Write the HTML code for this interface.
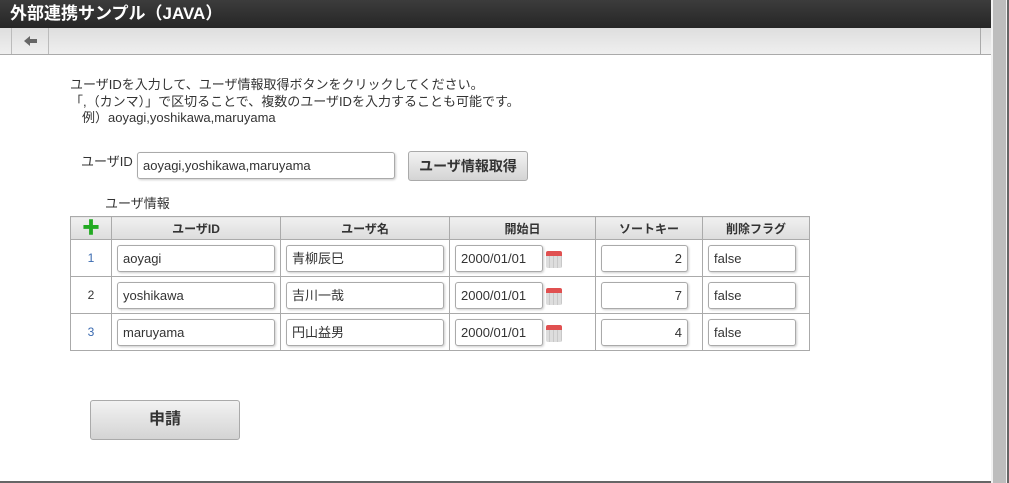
<!DOCTYPE html>
<html><head><meta charset="utf-8"><style>
*{box-sizing:border-box;margin:0;padding:0}
body{width:1009px;height:483px;overflow:hidden;background:#fff;font-family:"Liberation Sans","Noto Sans CJK JP",sans-serif;font-size:13px;color:#333;position:relative}
.hdr{position:absolute;left:0;top:0;width:991px;height:28px;background:linear-gradient(#3c3c3c,#262626);color:#fff;font-weight:bold;font-size:17px;line-height:28px;padding-left:10px}
.tb{position:absolute;left:0;top:28px;width:991px;height:27px;background:linear-gradient(#dedede,#efefef);border-bottom:1px solid #aaa}
.tb .b{position:absolute;left:11px;top:0;width:38px;height:26px;border-left:1px solid #bbb;border-right:1px solid #bbb}
.tb .r{position:absolute;left:980px;top:0;height:26px;border-left:1px solid #aaa}
.sb{position:absolute;left:991px;top:0;width:18px;height:483px;background:#f2f2f2}
.sb i{position:absolute;left:2px;top:0;width:13px;height:483px;background:#bdbdbd}
.sb u{position:absolute;right:0;top:0;width:2px;height:483px;background:#666}
.bot{position:absolute;left:0;top:481px;width:991px;height:2px;background:#666}
.t{position:absolute;white-space:nowrap;font-size:13px}
.in{position:absolute;height:27px;border:1px solid #aaa;border-radius:3px;box-shadow:1px 1px 2px #ccc;font-size:13px;padding-left:5px;line-height:25px;color:#333;background:#fff}
.btn{position:absolute;border:1px solid #aaa;border-radius:3px;background:linear-gradient(#f2f2f2,#d4d4d4);font-weight:bold;text-align:center;color:#333}
table{position:absolute;left:70px;top:216px;border-collapse:collapse}
td,th{border:1px solid #aaa;padding:0}
td>div.w{position:relative;height:36px}
th{height:23px;background:linear-gradient(#f0f0f0,#dcdcdc);font-size:12px;color:#333}
td{height:37px}
td.n{text-align:center;color:#3a6ab0;font-size:12px}
.in.c{top:5px;left:5px}
.cal{position:absolute;left:96px;top:11px;width:16px;height:17px;background:repeating-linear-gradient(90deg,#ddd 0 3px,#c8c8c8 3px 4px);border-top:5px solid #e05050;border-radius:2px}
</style></head><body>
<div class="hdr">外部連携サンプル（JAVA）</div>
<div class="tb"><div class="b"><svg width="38" height="26" viewBox="0 0 38 26"><path d="M12 13 L18 8 L18 11 L25 11 L25 15 L18 15 L18 18 Z" fill="#666"/></svg></div><div class="r"></div></div>
<div class="t" style="left:70px;top:74px">ユーザIDを入力して、ユーザ情報取得ボタンをクリックしてください。</div>
<div class="t" style="left:70px;top:91px">「,（カンマ）」で区切ることで、複数のユーザIDを入力することも可能です。</div>
<div class="t" style="left:82px;top:107px">例）aoyagi,yoshikawa,maruyama</div>
<div class="t" style="left:81px;top:151px">ユーザID</div>
<div class="in" style="left:137px;top:152px;width:258px">aoyagi,yoshikawa,maruyama</div>
<div class="btn" style="left:408px;top:151px;width:120px;height:30px;line-height:28px;font-size:14px">ユーザ情報取得</div>
<div class="t" style="left:105px;top:193px">ユーザ情報</div>
<table>
<tr><th style="width:41px;color:#2a2;font-size:18px;line-height:20px">✚</th><th style="width:169px">ユーザID</th><th style="width:169px">ユーザ名</th><th style="width:146px">開始日</th><th style="width:107px">ソートキー</th><th style="width:107px">削除フラグ</th></tr>
<tr><td class="n">1</td><td><div class="w"><div class="in c" style="width:158px">aoyagi</div></div></td><td><div class="w"><div class="in c" style="width:158px">青柳辰巳</div></div></td><td><div class="w"><div class="in c" style="width:88px">2000/01/01</div><div class="cal"></div></div></td><td><div class="w"><div class="in c" style="width:87px;text-align:right;padding-right:5px">2</div></div></td><td><div class="w"><div class="in c" style="width:88px">false</div></div></td></tr>
<tr><td class="n" style="color:#333">2</td><td><div class="w"><div class="in c" style="width:158px">yoshikawa</div></div></td><td><div class="w"><div class="in c" style="width:158px">吉川一哉</div></div></td><td><div class="w"><div class="in c" style="width:88px">2000/01/01</div><div class="cal"></div></div></td><td><div class="w"><div class="in c" style="width:87px;text-align:right;padding-right:5px">7</div></div></td><td><div class="w"><div class="in c" style="width:88px">false</div></div></td></tr>
<tr><td class="n">3</td><td><div class="w"><div class="in c" style="width:158px">maruyama</div></div></td><td><div class="w"><div class="in c" style="width:158px">円山益男</div></div></td><td><div class="w"><div class="in c" style="width:88px">2000/01/01</div><div class="cal"></div></div></td><td><div class="w"><div class="in c" style="width:87px;text-align:right;padding-right:5px">4</div></div></td><td><div class="w"><div class="in c" style="width:88px">false</div></div></td></tr>
</table>
<div class="btn" style="left:90px;top:400px;width:150px;height:40px;line-height:38px;font-size:16px">申請</div>
<div class="bot"></div>
<div class="sb"><i></i><u></u></div>
</body></html>
